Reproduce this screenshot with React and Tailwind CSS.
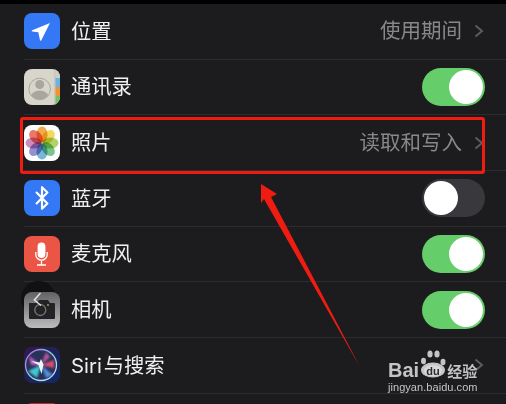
import React from 'react';
import { Bluetooth } from 'lucide-react';

const CJK = "font-['Inter','Noto_Sans_CJK_SC',sans-serif]";

const Chevron = () => (
  <svg width="11" height="14" viewBox="0 0 11 14" fill="none" className="ml-[12px] shrink-0">
    <path d="M1.500 1.500 L8 7 L1.500 12.500" stroke="#5c5c60" strokeWidth="2" />
  </svg>
);

const Toggle = ({ on }) => (
  <div className={on
    ? 'flex justify-end items-center w-[63px] h-[38px] rounded-full bg-[#65cd6a] pr-[2px]'
    : 'flex justify-start items-center w-[63px] h-[38px] rounded-full bg-[#39393d] pl-[2px]'}>
    <div className="w-[34px] h-[34px] rounded-full bg-white" />
  </div>
);

const IconBox = ({ className, children }) => (
  <div className={`relative w-[36px] h-[36px] rounded-[8px] shrink-0 flex items-center justify-center overflow-hidden ${className}`}>
    {children}
  </div>
);

const LocationIcon = () => (
  <svg width="36" height="36" viewBox="0 0 36 36">
    <path d="M26 10 L7.600 17.500 Q7.600 18.500 8.500 18.600 L14.300 19.300 L16 27.200 Q16.500 28 17.200 27.500 Z" fill="white" />
  </svg>
);

const ContactsIcon = () => (
  <svg width="36" height="36" viewBox="0 0 36 36">
    <defs>
      <clipPath id="avatar"><circle cx="15.700" cy="20" r="10.500" /></clipPath>
    </defs>
    <rect width="36" height="36" fill="#d8d5ca" />
    <rect x="30.500" width="1" height="36" fill="#bdbab0" />
    <rect x="31.500" width="4.500" height="9" fill="#d0cdc2" />
    <rect x="31.500" y="9" width="4.500" height="9" fill="#6bb1e8" />
    <rect x="31.500" y="18" width="4.500" height="9" fill="#ee9436" />
    <rect x="31.500" y="27" width="4.500" height="9" fill="#72c264" />
    <circle cx="15.700" cy="20" r="10.800" fill="none" stroke="#a9a69d" strokeWidth="1" />
    <g clipPath="url(#avatar)">
      <circle cx="15.700" cy="15.500" r="4.500" fill="#a9a69d" />
      <ellipse cx="15.700" cy="28" rx="9" ry="6.500" fill="#a9a69d" />
    </g>
  </svg>
);

const petals = ['#f0a23c', '#f3d34a', '#a9cf5a', '#6cbf82', '#6aaed6', '#8b83c9', '#c77fb5', '#e8685a'];

const PhotosIcon = () => (
  <svg width="36" height="36" viewBox="0 0 36 36">
    <rect width="36" height="36" fill="white" />
    {petals.map((c, i) => (
      <ellipse key={c} cx="18" cy="9.500" rx="5.500" ry="8" fill={c} fillOpacity="0.9"
        transform={`rotate(${i * 45} 18 18)`} style={{ mixBlendMode: 'multiply' }} />
    ))}
  </svg>
);

const MicIcon = () => (
  <svg width="36" height="36" viewBox="0 0 36 36" fill="none">
    <rect x="13.600" y="6.500" width="7.800" height="15.500" rx="3.900" fill="white" />
    <path d="M11.800 16 V18.500 a5.700 5.700 0 0 0 11.400 0 V16" stroke="white" strokeWidth="1.300" />
    <path d="M17.500 24.500 V28.500 M13 29 H22" stroke="white" strokeWidth="1.300" />
  </svg>
);

const CameraIcon = () => (
  <svg width="36" height="36" viewBox="0 0 36 36" fill="none">
    <defs>
      <linearGradient id="cam" x1="0" y1="0" x2="0" y2="1">
        <stop offset="0" stopColor="#626264" />
        <stop offset="1" stopColor="#bcbcbe" />
      </linearGradient>
    </defs>
    <rect width="36" height="36" fill="url(#cam)" />
    <path d="M5 11 H13 L15 8 H24 L26 11 H30 a1 1 0 0 1 1 1 V26 a1 1 0 0 1 -1 1 H6 a1 1 0 0 1 -1 -1 Z" fill="#232325" />
    <circle cx="16.300" cy="18" r="5.500" stroke="#77777a" strokeWidth="1.300" />
    <circle cx="24" cy="13" r="0.900" fill="#d29a3c" />
    <path d="M16.500 1 L10.300 8 L17 13.500" stroke="#e8e8e8" strokeWidth="1.300" />
  </svg>
);

const SiriIcon = () => (
  <svg width="36" height="36" viewBox="0 0 36 36">
    <defs>
      <linearGradient id="siribg" x1="0" y1="0" x2="1" y2="1">
        <stop offset="0" stopColor="#33184f" />
        <stop offset="1" stopColor="#0e2a68" />
      </linearGradient>
      <linearGradient id="siriring" x1="0" y1="0" x2="1" y2="1">
        <stop offset="0" stopColor="#b85fd0" />
        <stop offset="0.500" stopColor="#7fd6e0" />
        <stop offset="1" stopColor="#d8e8f0" />
      </linearGradient>
      <filter id="siriblur"><feGaussianBlur stdDeviation="1.200" /></filter>
      <filter id="siriblur2"><feGaussianBlur stdDeviation="0.500" /></filter>
    </defs>
    <rect width="36" height="36" fill="url(#siribg)" />
    <circle cx="17" cy="18" r="15.500" fill="#2a3158" stroke="url(#siriring)" strokeWidth="1.300" />
    <g filter="url(#siriblur)">
      <path d="M17 18 L5 9 L7 18 Z" fill="#c060c8" />
      <path d="M17 18 L22 5 L26 10 Z" fill="#b5569f" />
      <path d="M17 18 L30 13 L30 21 Z" fill="#d9506f" />
      <path d="M17 18 L4 24 L13 31 Z" fill="#40c6d4" />
      <path d="M17 18 L29 28 L22 31 Z" fill="#4f8fe0" />
    </g>
    <path d="M17 12 L19.500 17.500 L17.500 27 L14.500 18 L7 14 L15.500 15.500 Z" fill="#e9fbfb" filter="url(#siriblur2)" />
  </svg>
);

const Row = ({ icon, label, value, toggle, chevron }) => (
  <div className="flex items-center h-[55.67px] ml-[24px] border-b border-[#2d2d30] pr-[21px]">
    {icon}
    <div className="ml-[11px] pt-[1px]">{label}</div>
    <div className="flex-1" />
    {value && <span className={`pt-[1px] text-[20.5px] text-[#88888c] ${CJK}`}>{value}</span>}
    {chevron && <Chevron />}
    {toggle !== undefined && <Toggle on={toggle} />}
  </div>
);

const Label = ({ children }) => (
  <span className={`text-[20.3px] text-[#f0f0f2] ${CJK}`}>{children}</span>
);

// red arrow + highlight box are annotations over the list
const Annotation = () => (
  <>
    <div className="absolute left-[20px] top-[117px] w-[465px] h-[56.5px] border-[3px] border-[#f01c12] rounded-[3px]" />
    <svg className="absolute left-0 top-0" width="506" height="404">
      <path d="M261 184 L277 194 L271 197 L360 367 L264 199 L261 203 Z" fill="#f01c12" />
    </svg>
  </>
);

const Watermark = () => (
  <div className="absolute left-[388px] top-[350px] flex flex-col items-start text-[#c4c4c4]">
    <div className="flex items-end">
      <span className="-mb-[2px] text-[20px] leading-[20px] font-bold font-['Liberation_Sans',sans-serif]">Bai</span>
      <svg width="28" height="28" viewBox="0 0 28 28">
        <ellipse cx="4.500" cy="11" rx="2.500" ry="3.300" fill="#c4c4c4" />
        <ellipse cx="11" cy="4" rx="2.600" ry="3.500" fill="#c4c4c4" />
        <ellipse cx="18" cy="4" rx="2.600" ry="3.500" fill="#c4c4c4" />
        <ellipse cx="24" cy="12" rx="2.500" ry="3.300" fill="#c4c4c4" />
        <ellipse cx="14" cy="20" rx="12" ry="7.500" fill="#c4c4c4" />
        <ellipse cx="14" cy="20.500" rx="9" ry="5.500" fill="#d8d8d8" />
        <text x="14" y="24.500" textAnchor="middle" fontSize="11" fontWeight="700" fill="#2a2a2c" fontFamily="Liberation Sans">du</text>
      </svg>
      <span className={`-mb-[2px] text-[15px] leading-[16px] font-bold ${CJK}`}>经验</span>
    </div>
    <span className="mt-[2px] text-[11px] leading-[14px] tracking-[0.05px] font-['Liberation_Sans',sans-serif]">jingyan.baidu.com</span>
  </div>
);

export default function App() {
  return (
    <div className="relative w-[506px] h-[404px] overflow-hidden bg-[#1c1c1e]">
      <div className="h-[4px] bg-black" />
      {/* dark round back button floating behind the camera icon */}
      <div className="absolute left-[21px] top-[281px] w-[35px] h-[35px] rounded-full bg-[#111113]" />
      <Row icon={<IconBox className="bg-[#3478f6]"><LocationIcon /></IconBox>} label={<Label>位置</Label>} value="使用期间" chevron />
      <Row icon={<IconBox><ContactsIcon /></IconBox>} label={<Label>通讯录</Label>} toggle={true} />
      <Row icon={<IconBox><PhotosIcon /></IconBox>} label={<Label>照片</Label>} value="读取和写入" chevron />
      <Row icon={<IconBox className="bg-[#3478f6]"><Bluetooth size={26} color="white" /></IconBox>} label={<Label>蓝牙</Label>} toggle={false} />
      <Row icon={<IconBox className="bg-[#eb5545]"><MicIcon /></IconBox>} label={<Label>麦克风</Label>} toggle={true} />
      <Row icon={<IconBox><CameraIcon /></IconBox>} label={<Label>相机</Label>} toggle={true} />
      <Row icon={<IconBox><SiriIcon /></IconBox>} label={<Label>Siri<span className="ml-[2px]">与搜索</span></Label>} chevron />
      <Row icon={<IconBox className="bg-[#b03325]" />} label={<Label>健康</Label>} />
      <Annotation />
      <Watermark />
    </div>
  );
}
